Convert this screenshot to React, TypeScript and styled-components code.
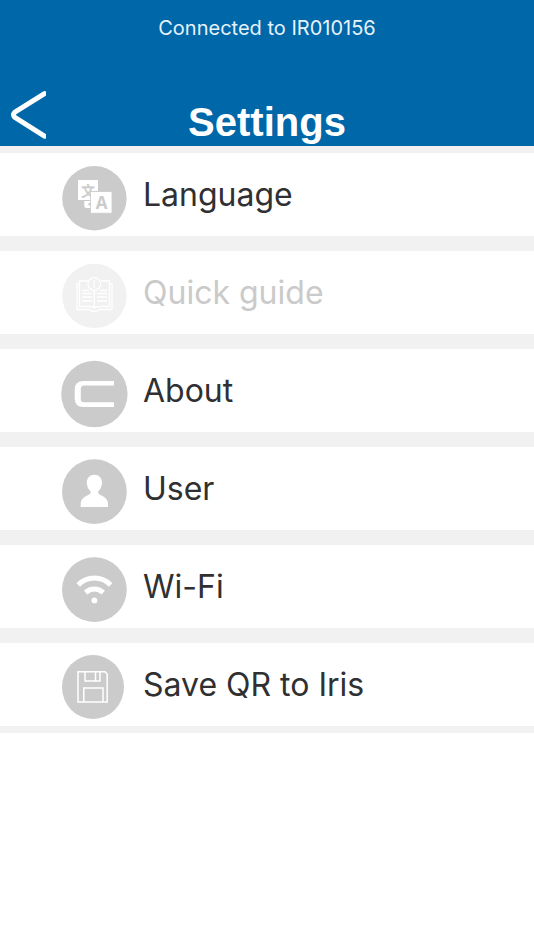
import React from "react";
import styled, { createGlobalStyle } from "styled-components";

const GlobalStyle = createGlobalStyle`
  *, *::before, *::after { box-sizing: border-box; }
  body {
    margin: 0;
    background: #ffffff;
    font-family: Inter, "Liberation Sans", sans-serif;
  }
`;

const Header = styled.header`
  background: #0067a9;
  color: #ffffff;
  padding-top: 16px;
`;

const Status = styled.p`
  margin: 0;
  font-size: 20px;
  line-height: 24px;
  text-align: center;
  color: #e6f2fa;
`;

const TitleBar = styled.div`
  display: grid;
  grid-template-columns: 56px 1fr 56px;
  align-items: end;
  margin-top: 48px;
  height: 58px;
`;

const BackButton = styled.button`
  display: flex;
  height: 58px;
  padding: 0 0 0 8px;
  border: 0;
  background: none;
  color: inherit;
  cursor: pointer;
`;

const Title = styled.h1`
  margin: 0;
  font-family: "Liberation Sans", Arial, sans-serif;
  font-size: 40px;
  line-height: 48px;
  font-weight: 700;
  text-align: center;
`;

const Menu = styled.ul`
  display: flex;
  flex-direction: column;
  gap: 15px;
  margin: 0;
  padding: 7px 0;
  list-style: none;
  background: #f1f1f1;
`;

const Row = styled.button`
  display: flex;
  align-items: center;
  gap: 15px;
  width: 100%;
  height: 83px;
  padding: 0 16px 0 60px;
  border: 0;
  background: #ffffff;
  color: #303032;
  font-family: inherit;
  font-size: 32px;
  line-height: 42px;
  text-align: left;
  cursor: pointer;

  &:disabled {
    color: #cacaca;
    cursor: default;
  }
`;

const IconCell = styled.span`
  display: flex;
  flex: none;
  padding-top: 7px;
`;

const Icon = ({ children }: { children: React.ReactNode }) => (
  <svg width="68" height="68" viewBox="0 0 68 68" fill="none" aria-hidden="true">
    {children}
  </svg>
);

const GREY = "#cbcbcb";

const LanguageIcon = () => (
  <Icon>
    <circle cx="34.4" cy="34.2" r="32.2" fill={GREY} />
    <path d="M18 16H38V27H31V36H18Z" fill="#fff" />
    <text x="28" y="31.6" fontSize="13.5" fontWeight="500" textAnchor="middle" fill={GREY} stroke={GREY} strokeWidth="0.4" fontFamily="'Noto Sans CJK SC', sans-serif">文</text>
    <path d="M24.3 37H31V39H28.5V41.5H31V44H26.3Q24.3 44 24.3 42Z" fill="#fff" />
    <rect x="30.6" y="27.6" width="21.4" height="21.6" fill="#fff" stroke={GREY} strokeWidth="0.8" />
    <text x="41.5" y="44.7" fontSize="17" fontWeight="700" textAnchor="middle" fill={GREY} fontFamily="'Open Sans', sans-serif">A</text>
  </Icon>
);

const GuideIcon = () => (
  <Icon>
    <circle cx="34.4" cy="33.9" r="32.2" fill="#f1f1f1" />
    <g stroke="#fff" strokeWidth="1.3">
      <path d="M28 19H19.5V44.5H30Q34.3 44.5 34.3 47Q34.3 44.5 38.5 44.5H49.5V19H41" />
      <path d="M19.5 22H17V47.5H29.5Q31 49.5 34.3 49.5T39 47.5H52V22H49.5" />
      <path d="M34.3 29V46" />
      <circle cx="34.3" cy="22" r="6.3" />
      <path d="M34.3 21V26M34.3 18V19.5M33 21H34.3" />
      <path d="M22 28.5H29M40 28.5H47M22 31.5H32M37 31.5H47M22 35H32M37 35H47M22 39H32M37 39H47" />
    </g>
  </Icon>
);

const AboutIcon = () => (
  <Icon>
    <circle cx="34.4" cy="34" r="33.2" fill={GREY} />
    <path d="M54 21H23.5Q14.7 21 14.7 29.5V38.5Q14.7 47 23.5 47H54V42.3H24Q20.8 42.3 20.8 39V29Q20.8 25.5 24 25.5H54Z" fill="#fff" />
  </Icon>
);

const UserIcon = () => (
  <Icon>
    <circle cx="34.4" cy="33.6" r="32.4" fill={GREY} />
    <path d="M34.4 16.7C39 16.7 42 20 42 24.5C42 28.3 40.4 31.6 38.2 33.2V35.2C39 37.3 48 38.5 48 45.5V49H20.7V45.5C20.7 38.5 29.8 37.3 30.6 35.2V33.2C28.4 31.6 26.8 28.3 26.8 24.5C26.8 20 29.8 16.7 34.4 16.7Z" fill="#fff" />
  </Icon>
);

const WifiIcon = () => (
  <Icon>
    <circle cx="34.4" cy="33.6" r="32.4" fill={GREY} />
    <path d="M18.2 29A22.5 22.5 0 0 1 50.6 29" stroke="#fff" strokeWidth="5" />
    <path d="M25.6 36.6A12.6 12.6 0 0 1 43.2 36.6" stroke="#fff" strokeWidth="5" />
    <circle cx="34.4" cy="44.4" r="2.9" fill="#fff" />
  </Icon>
);

const SaveIcon = () => (
  <Icon>
    <ellipse cx="33" cy="33" rx="31" ry="32" fill={GREY} />
    <g stroke="#fff" strokeWidth="1.5">
      <path d="M18 17.7H45L47.2 20V48H18Z" />
      <path d="M25 17.7V27H40V17.7M35.5 17.7V27" />
      <path d="M23.8 48V34H43V48" />
    </g>
  </Icon>
);

const items = [
  { label: "Language", Glyph: LanguageIcon },
  { label: "Quick guide", Glyph: GuideIcon, disabled: true },
  { label: "About", Glyph: AboutIcon },
  { label: "User", Glyph: UserIcon },
  { label: "Wi-Fi", Glyph: WifiIcon },
  { label: "Save QR to Iris", Glyph: SaveIcon },
];

export default function App() {
  return (
    <>
      <GlobalStyle />
      <Header>
        <Status>Connected to IR010156</Status>
        <TitleBar>
          <BackButton type="button" aria-label="Back">
            <svg width="38" height="56" viewBox="0 0 38 56" fill="none" aria-hidden="true">
              <path d="M36.5 5.6L6.8 24.2Q4.2 26.8 6.8 29.4L36.5 48.2" stroke="#fff" strokeWidth="5" strokeLinecap="round" />
            </svg>
          </BackButton>
          <Title>Settings</Title>
        </TitleBar>
      </Header>
      <main>
        <Menu>
          {items.map(({ label, Glyph, disabled }) => (
            <li key={label}>
              <Row type="button" disabled={disabled}>
                <IconCell>
                  <Glyph />
                </IconCell>
                {label}
              </Row>
            </li>
          ))}
        </Menu>
      </main>
    </>
  );
}
